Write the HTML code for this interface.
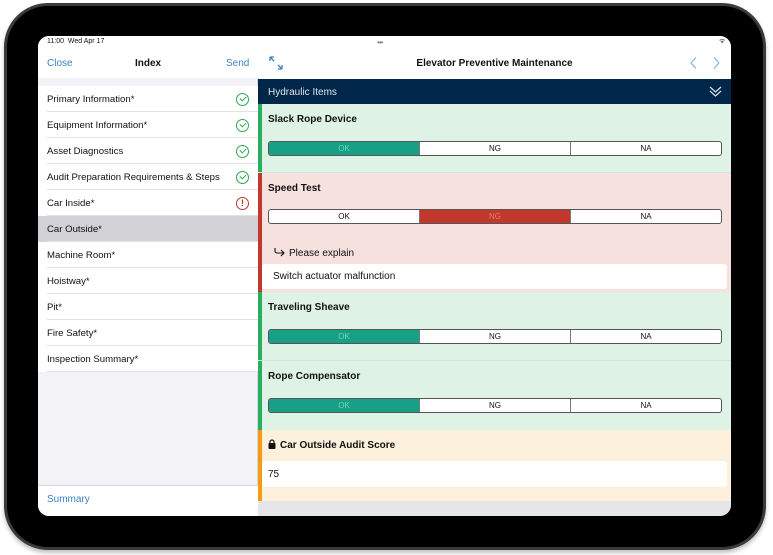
<!DOCTYPE html>
<html><head><meta charset="utf-8"><style>
*{box-sizing:border-box;margin:0;padding:0}
body{width:773px;height:555px;background:#fff;position:relative;overflow:hidden;font-family:"Liberation Sans",sans-serif;color:#111}
.dev{position:absolute;left:4px;top:3px;width:762px;height:547px;border-radius:44px;background:#000;border:3px solid #3a3a3c;box-shadow:0 3px 4px rgba(0,0,0,.25)}
.scr{position:absolute;left:38px;top:36px;width:693px;height:480px;border-radius:11px;overflow:hidden;background:#f2f2f7}
.a{position:absolute}
.left{left:0;top:0;width:220px;height:480px;background:#f2f2f7;border-right:1px solid #d8d8dc}
.row{position:absolute;left:0;width:220px;height:26px;background:#fff;font-size:9.6px;line-height:28px;padding-left:9px}
.row:after{content:"";position:absolute;left:9px;right:0;bottom:0;border-bottom:1px solid #e2e2e6}
.chk{position:absolute;right:9px;top:7px;width:13px;height:13px;border:1.3px solid #2ea84f;border-radius:50%}
.chk:before{content:"";position:absolute;left:3px;top:2px;width:5px;height:3px;border-left:1.3px solid #2ea84f;border-bottom:1.3px solid #2ea84f;transform:rotate(-45deg)}
.blue{color:#3b82c4}
.sec{position:absolute;left:220px;width:473px}
.bar{position:absolute;left:0;top:0;bottom:0;width:4px}
.t{position:absolute;left:10px;font-size:10px;font-weight:bold}
.seg{position:absolute;left:10px;width:454px;height:15px;border:1px solid #555;border-radius:3px;display:flex;overflow:hidden;background:#fff;font-size:8px;line-height:14px;text-align:center}
.seg div{flex:1;border-left:1px solid #777}
.seg div:first-child{border-left:none}
.ok{background:#17a085;color:#6fd6b9}
.ng{background:#c0392b;color:#e97a6c}
</style></head><body>
<div class="dev"></div>
<div class="scr">
 <div class="a left">
  <div class="a" style="left:0;top:0;width:220px;height:42px;background:#fff"></div>
  <div class="a" style="left:9px;top:2px;font-size:7px">11:00&nbsp; Wed Apr 17</div>
  <div class="a blue" style="left:9px;top:22px;font-size:10px">Close</div>
  <div class="a" style="left:97px;top:22px;font-size:10px;font-weight:bold">Index</div>
  <div class="a blue" style="left:188px;top:22px;font-size:10px">Send</div>
  <div class="row" style="top:50px">Primary Information*<span class="chk"></span></div>
  <div class="row" style="top:76px">Equipment Information*<span class="chk"></span></div>
  <div class="row" style="top:102px">Asset Diagnostics<span class="chk"></span></div>
  <div class="row" style="top:128px">Audit Preparation Requirements &amp; Steps<span class="chk"></span></div>
  <div class="row" style="top:154px">Car Inside*<span style="position:absolute;right:9px;top:7px;width:13px;height:13px;border:1.3px solid #c0392b;border-radius:50%;color:#c0392b;font-size:9px;line-height:11px;text-align:center;font-weight:bold">!</span></div>
  <div class="row" style="top:180px;background:#d1d1d6">Car Outside*</div>
  <div class="row" style="top:206px">Machine Room*</div>
  <div class="row" style="top:232px">Hoistway*</div>
  <div class="row" style="top:258px">Pit*</div>
  <div class="row" style="top:284px">Fire Safety*</div>
  <div class="row" style="top:310px">Inspection Summary*</div>
  <div class="a" style="left:0;top:449px;width:220px;height:31px;background:#fff;border-top:1px solid #d8d8dc"></div>
  <div class="a blue" style="left:9px;top:458px;font-size:10px">Summary</div>
 </div>
 <div class="sec" style="top:0;height:43px;background:#fff">
  <svg class="a" style="left:11px;top:20px" width="14" height="14" viewBox="0 0 14 14" fill="none" stroke="#3b82c4" stroke-width="1.3"><path d="M1 1L5 5M1 1h4M1 1v4M13 13L9 9M13 13h-4M13 13v-4"/></svg>
  <div class="a" style="left:119px;top:2px;font-size:8px;color:#888;letter-spacing:-1px">•••</div>
  <div class="a" style="left:0;width:473px;top:22px;text-align:center;font-size:10px;font-weight:bold">Elevator Preventive Maintenance</div>
  <svg class="a" style="left:430px;top:20px" width="40" height="14" viewBox="0 0 40 14" fill="none" stroke="#7fb1dd" stroke-width="1.1"><path d="M8 1.5L3 7L8 12.5M26 1.5L31 7L26 12.5"/></svg>
  <div class="a" style="left:461px;top:1px;font-size:7px">ᯤ</div>
 </div>
 <div class="sec" style="top:43px;height:25px;background:#00264a;color:#dfe6ee">
  <div class="a" style="left:10px;top:8px;font-size:10px">Hydraulic Items</div>
  <svg class="a" style="left:451px;top:6px" width="13" height="13" viewBox="0 0 13 13" fill="none" stroke="#dfe6ee" stroke-width="1.2"><path d="M1 2l5.5 5L12 2M1 6l5.5 5L12 6"/></svg>
 </div>
 <div class="sec" style="top:68px;height:69px;background:#dff2e6;border-bottom:1px solid #d0e6d8"><div class="bar" style="background:#27ae60"></div>
  <div class="t" style="top:10px">Slack Rope Device</div>
  <div class="seg" style="top:37px"><div class="ok">OK</div><div>NG</div><div>NA</div></div></div>
 <div class="sec" style="top:137px;height:119px;background:#f7e1df"><div class="bar" style="background:#c0392b"></div>
  <div class="t" style="top:10px">Speed Test</div>
  <div class="seg" style="top:36px"><div>OK</div><div class="ng">NG</div><div>NA</div></div>
  <svg class="a" style="left:16px;top:75px" width="11" height="9" viewBox="0 0 11 9" fill="none" stroke="#111" stroke-width="1.1"><path d="M1 0v3a2 2 0 0 0 2 2h7M7 2l3 3l-3 3"/></svg>
  <div class="a" style="left:31px;top:75px;font-size:10px">Please explain</div>
  <div class="a" style="left:4px;top:91px;width:465px;height:25px;background:#fff;border-radius:3px;font-size:10px;line-height:26px;padding-left:11px">Switch actuator malfunction</div></div>
 <div class="sec" style="top:256px;height:69px;background:#dff2e6;border-bottom:1px solid #d0e6d8"><div class="bar" style="background:#27ae60"></div>
  <div class="t" style="top:10px">Traveling Sheave</div>
  <div class="seg" style="top:37px"><div class="ok">OK</div><div>NG</div><div>NA</div></div></div>
 <div class="sec" style="top:325px;height:69px;background:#dff2e6"><div class="bar" style="background:#27ae60"></div>
  <div class="t" style="top:10px">Rope Compensator</div>
  <div class="seg" style="top:37px"><div class="ok">OK</div><div>NG</div><div>NA</div></div></div>
 <div class="sec" style="top:394px;height:71px;background:#fdf0dc"><div class="bar" style="background:#f39c12"></div>
  <svg class="a" style="left:10px;top:9px" width="8" height="10" viewBox="0 0 8 10"><path d="M2 4V3a2 2 0 0 1 4 0v1" fill="none" stroke="#111" stroke-width="1.2"/><rect x="0.5" y="4" width="7" height="6" rx="1" fill="#111"/></svg>
  <div class="t" style="top:10px;left:22px">Car Outside Audit Score</div>
  <div class="a" style="left:4px;top:31px;width:465px;height:26px;background:#fff;border-radius:3px;font-size:10px;line-height:28px;padding-left:6px">75</div></div>
 <div class="sec" style="top:465px;height:15px;background:#e5e5ea"></div>
</div>
</body></html>
